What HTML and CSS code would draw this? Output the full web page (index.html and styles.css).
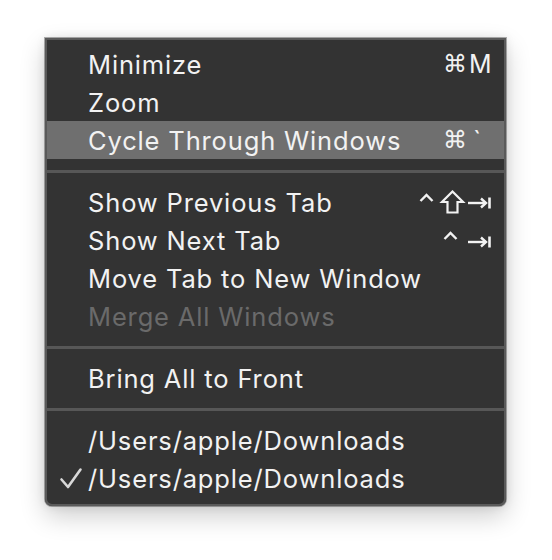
FILE: index.html
```html
<!DOCTYPE html>
<html>
<head>
<meta charset="utf-8">
<link rel="stylesheet" href="styles.css">
</head>
<body>
<div class="page">
  <div class="menu">
    <div class="row"><span class="label">Minimize</span><span class="keys"><span class="cmd">⌘</span><span class="key">M</span></span></div>
    <div class="row"><span class="label">Zoom</span></div>
    <div class="row hl"><span class="label">Cycle Through Windows</span><span class="keys"><span class="cmd">⌘</span><span class="key tick">`</span></span></div>
    <div class="sep"></div>
    <div class="row"><span class="label">Show Previous Tab</span>
      <span class="keys">
        <svg width="72" height="24" viewBox="0 0 72 24" class="sk">
          <polyline points="1.5,11 7.5,5 13.5,11" fill="none" stroke="#f2f2f2" stroke-width="2.4" stroke-linejoin="miter"/>
          <path d="M33.5,1.5 L44,12 L38.5,12 L38.5,22.5 L28.5,22.5 L28.5,12 L23,12 Z" fill="none" stroke="#f2f2f2" stroke-width="2.2" stroke-linejoin="miter"/>
          <line x1="49" y1="13" x2="67" y2="13" stroke="#f2f2f2" stroke-width="2.4"/>
          <polyline points="62,8.5 67,13 62,17.5" fill="none" stroke="#f2f2f2" stroke-width="2.4"/>
          <line x1="70.5" y1="7.5" x2="70.5" y2="18.5" stroke="#f2f2f2" stroke-width="2.6"/>
        </svg>
      </span></div>
    <div class="row"><span class="label">Show Next Tab</span>
      <span class="keys">
        <svg width="48" height="24" viewBox="0 0 48 24" class="sk">
          <polyline points="1.5,11 7.5,5 13.5,11" fill="none" stroke="#f2f2f2" stroke-width="2.4"/>
          <line x1="25" y1="14" x2="43" y2="14" stroke="#f2f2f2" stroke-width="2.4"/>
          <polyline points="38,9.5 43,14 38,18.5" fill="none" stroke="#f2f2f2" stroke-width="2.4"/>
          <line x1="46.5" y1="8.5" x2="46.5" y2="19.5" stroke="#f2f2f2" stroke-width="2.6"/>
        </svg>
      </span></div>
    <div class="row"><span class="label">Move Tab to New Window</span></div>
    <div class="row disabled"><span class="label">Merge All Windows</span></div>
    <div class="sep"></div>
    <div class="row"><span class="label">Bring All to Front</span></div>
    <div class="sep"></div>
    <div class="row"><span class="label">/Users/apple/Downloads</span></div>
    <div class="row checked">
      <svg class="check" width="24" height="24" viewBox="0 0 24 24">
        <polyline points="2.5,12.5 9,20 21.5,2.5" fill="none" stroke="#d8d8d8" stroke-width="2.6" stroke-linecap="round" stroke-linejoin="round"/>
      </svg>
      <span class="label">/Users/apple/Downloads</span></div>
  </div>
</div>
</body>
</html>
```
FILE: styles.css
```css
html, body {
  margin: 0;
  padding: 0;
  background: #ffffff;
}
.page {
  width: 552px;
  height: 560px;
  padding: 38px 0 0 45px;
  box-sizing: border-box;
}
.menu {
  width: 461px;
  box-sizing: border-box;
  background: #333333;
  border-radius: 0 0 7px 7px;
  padding: 7px 0 9px 0;
  box-shadow: inset 0 0 0 2px #5a5a5a, 0 0 0 1px rgba(0,0,0,0.3), 0 10px 26px rgba(0,0,0,0.2), 0 0 10px rgba(0,0,0,0.1);
  font-family: "Inter", "Liberation Sans", sans-serif;
  font-size: 25.5px;
  color: #f2f2f2;
  position: relative;
}
.row {
  position: relative;
  height: 38px;
  display: flex;
  align-items: center;
  justify-content: space-between;
  padding: 0 13px 0 41px;
  margin: 0 2px;
}
.row.hl {
  background: #6f6f6f;
}
.row.disabled {
  color: #6a6a6a;
}
.label {
  white-space: nowrap;
  letter-spacing: 0.85px;
}
.keys {
  display: flex;
  align-items: center;
}
.cmd {
  font-family: "DejaVu Sans", sans-serif;
  font-size: 24px;
  width: 26px;
}
.key {
  font-family: "Inter", sans-serif;
  font-size: 25px;
  width: 22px;
  text-align: right;
}
.key.tick {
  text-align: left;
  padding-left: 4px;
  width: 18px;
}
.sk {
  display: block;
}
.sep {
  height: 3px;
  background: #575757;
  margin: 11px 2px 10px 2px;
}
.check {
  position: absolute;
  left: 12px;
  top: 8px;
}
```
